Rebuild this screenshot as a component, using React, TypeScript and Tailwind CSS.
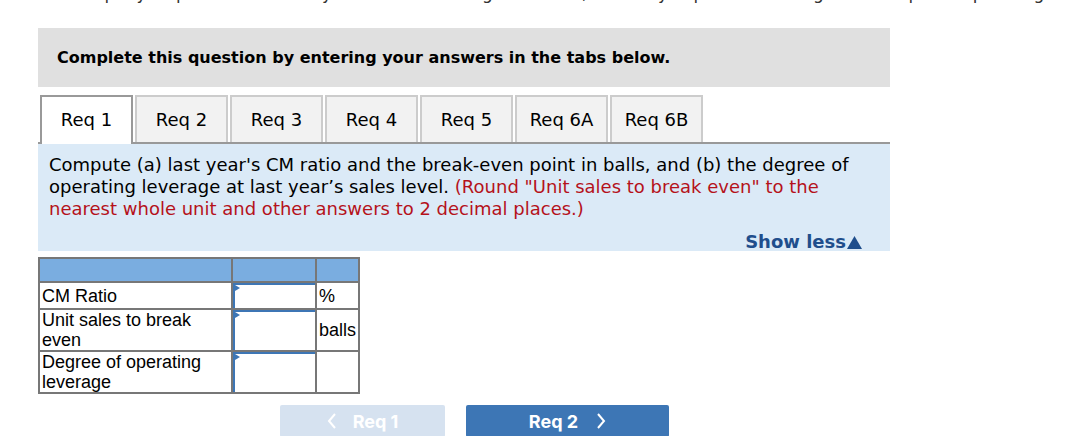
import React from "react";

const tabs = ["Req 1", "Req 2", "Req 3", "Req 4", "Req 5", "Req 6A", "Req 6B"];

function InputCell({ h }: { h: string }) {
  return (
    <td className="p-0 border-2 border-[#777] align-top">
      <div className={`relative w-full border-l-2 border-t-2 border-[#3d76b5] bg-white ${h}`}>
        <span className="absolute left-0 top-0 w-0 h-0 border-t-[3px] border-b-[3px] border-l-[5px] border-t-transparent border-b-transparent border-l-[#3d76b5]" />
      </div>
    </td>
  );
}

export default function App() {
  return (
    <div className="w-[1066px] h-[436px] bg-white overflow-hidden font-['DejaVu_Sans','Verdana',sans-serif]">
      <div className="h-[3px] overflow-hidden">
        <div className="mt-[-16px] pl-[35px] text-[17px] leading-[18px] text-[#333] whitespace-nowrap">
          the company's operations are very sensitive to changes in sales, and they expect that doing so will improve operating leverage
        </div>
      </div>
      <div className="ml-[38px] mt-[25px] w-[852px]">
        <div className="h-[59px] bg-[#e0e0e0] pl-[19px] flex items-center">
          <span className="font-bold text-[16px] text-black">Complete this question by entering your answers in the tabs below.</span>
        </div>
        <div className="mt-[8px] pl-[2px] flex gap-[2px] items-end">
          {tabs.map((t, i) =>
            i === 0 ? (
              <div key={t} className="w-[93px] h-[49px] mb-[-2px] pb-[2px] relative z-10 bg-white border-2 border-b-0 border-[#999] flex items-center justify-center text-[18px] text-black">
                {t}
              </div>
            ) : (
              <div key={t} className="w-[93px] h-[47px] bg-[#f2f2f2] border-2 border-b-0 border-[#ccc] flex items-center justify-center text-[18px] text-black">
                {t}
              </div>
            )
          )}
        </div>
        <div className="border-t-2 border-[#999] bg-[#dbeaf7] h-[109px] pl-[11px] pr-[28px] pt-[10px] flex flex-col">
          <p className="text-[18px] leading-[22px] text-black">
            Compute (a) last year's CM ratio and the break-even point in balls, and (b) the degree of operating leverage at last year’s sales level.{" "}
            <span className="text-[#b5121b]">(Round "Unit sales to break even" to the nearest whole unit and other answers to 2 decimal places.)</span>
          </p>
          <div className="mt-auto mb-[-2px] flex justify-end">
            <span className="font-bold text-[18px] leading-[22px] text-[#1f4e8c] flex items-center">
              Show less
              <svg width="15" height="13" viewBox="0 0 15 13" className="ml-[1px]">
                <polygon points="7.5,0 15,13 0,13" fill="#1f4e8c" />
              </svg>
            </span>
          </div>
        </div>
        <table className="mt-[6px] border-collapse font-['Liberation_Sans','Arial',sans-serif] text-[18px] leading-[20px] text-black">
          <tbody>
            <tr className="h-[24px] bg-[#7aade0]">
              <td className="w-[193px] border-2 border-[#777] p-0"></td>
              <td className="w-[84px] border-2 border-[#777] p-0"></td>
              <td className="w-[42px] border-2 border-[#777] p-0"></td>
            </tr>
            <tr className="h-[27px]">
              <td className="border-2 border-[#777] px-[2px] py-0">CM Ratio</td>
              <InputCell h="h-[25px]" />
              <td className="border-2 border-[#777] px-[2px] py-0">%</td>
            </tr>
            <tr className="h-[42px]">
              <td className="border-2 border-[#777] px-[2px] py-0">Unit sales to break even</td>
              <InputCell h="h-[40px]" />
              <td className="border-2 border-[#777] px-[2px] py-0">balls</td>
            </tr>
            <tr className="h-[42px]">
              <td className="border-2 border-[#777] px-[2px] py-0">Degree of operating leverage</td>
              <InputCell h="h-[40px]" />
              <td className="border-2 border-[#777] px-[2px] py-0"></td>
            </tr>
          </tbody>
        </table>
      </div>
      <div className="mt-[11px] flex gap-[21px] pl-[280px] font-['Inter','Roboto',sans-serif]">
        <div className="w-[165px] h-[32px] rounded-[2px] bg-[#d6e2f0] text-white font-bold text-[18px] flex items-center justify-center gap-[16px]">
          <svg width="10" height="16" viewBox="0 0 10 16"><polyline points="8,1 2,8 8,15" fill="none" stroke="white" strokeWidth="2" /></svg>
          <span>Req 1</span>
        </div>
        <div className="w-[203px] h-[32px] rounded-[2px] bg-[#3d76b5] text-white font-bold text-[18px] flex items-center justify-center gap-[18px]">
          <span>Req 2</span>
          <svg width="10" height="16" viewBox="0 0 10 16"><polyline points="2,1 8,8 2,15" fill="none" stroke="white" strokeWidth="2" /></svg>
        </div>
      </div>
    </div>
  );
}
